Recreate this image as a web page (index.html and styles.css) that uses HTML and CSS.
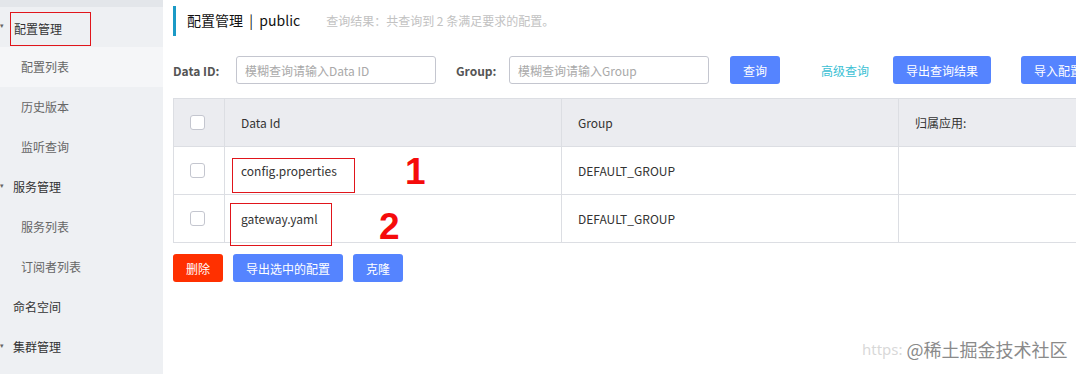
FILE: index.html
```html
<!DOCTYPE html>
<html lang="zh">
<head>
<meta charset="utf-8">
<title>配置管理</title>
<link rel="stylesheet" href="styles.css">
</head>
<body>
<div class="app">
  <aside class="sidebar">
    <div class="side-top"></div>
    <div class="menu-item group"><span class="caret">▾</span><span class="mark-box">配置管理</span></div>
    <div class="menu-item sub active">配置列表</div>
    <div class="menu-item sub">历史版本</div>
    <div class="menu-item sub">监听查询</div>
    <div class="menu-item group"><span class="caret">▾</span>服务管理</div>
    <div class="menu-item sub">服务列表</div>
    <div class="menu-item sub">订阅者列表</div>
    <div class="menu-item group">命名空间</div>
    <div class="menu-item group"><span class="caret">▾</span>集群管理</div>
  </aside>
  <main class="main">
    <div class="title-bar">
      <span class="title">配置管理 &nbsp;|&nbsp; public</span>
      <span class="result">查询结果：共查询到 2 条满足要求的配置。</span>
    </div>
    <div class="search-row">
      <label class="field-label">Data ID:</label>
      <div class="input">模糊查询请输入Data ID</div>
      <label class="field-label group-label">Group:</label>
      <div class="input">模糊查询请输入Group</div>
      <button class="btn btn-blue btn-query">查询</button>
      <a class="link">高级查询</a>
      <button class="btn btn-blue btn-export">导出查询结果</button>
      <button class="btn btn-blue btn-import">导入配置</button>
    </div>
    <div class="table">
      <div class="tr thead">
        <div class="td c-check"><span class="checkbox"></span></div>
        <div class="td c-id">Data Id</div>
        <div class="td c-group">Group</div>
        <div class="td c-app">归属应用:</div>
      </div>
      <div class="tr">
        <div class="td c-check"><span class="checkbox"></span></div>
        <div class="td c-id">config.properties</div>
        <div class="td c-group">DEFAULT_GROUP</div>
        <div class="td c-app"></div>
      </div>
      <div class="tr">
        <div class="td c-check"><span class="checkbox"></span></div>
        <div class="td c-id">gateway.yaml</div>
        <div class="td c-group">DEFAULT_GROUP</div>
        <div class="td c-app"></div>
      </div>
      <div class="anno box1"></div>
      <div class="anno box2"></div>
      <div class="anno num num1">1</div>
      <div class="anno num num2">2</div>
    </div>
    <div class="action-row">
      <button class="btn btn-red">删除</button>
      <button class="btn btn-blue btn-export-sel">导出选中的配置</button>
      <button class="btn btn-blue btn-clone">克隆</button>
    </div>
  </main>
  <div class="watermark"><span class="wm-url">https:</span><span class="wm-main">@稀土掘金技术社区</span></div>
</div>
</body>
</html>
```

FILE: styles.css
```css
* { box-sizing: border-box; }
html, body { margin: 0; padding: 0; }
body {
  width: 1076px;
  height: 374px;
  overflow: hidden;
  background: #fff;
  font-family: "Noto Sans CJK SC", "Noto Sans", sans-serif;
  font-size: 12px;
  color: #333;
}
.app {
  display: flex;
  height: 374px;
  position: relative;
  overflow: hidden;
}
.sidebar {
  width: 163px;
  flex: none;
  background: #eef0f3;
  display: flex;
  flex-direction: column;
}
.side-top {
  height: 7px;
  background: #e3e6ea;
}
.menu-item {
  height: 40px;
  display: flex;
  align-items: center;
  position: relative;
  color: #333;
  line-height: 1;
}
.menu-item.group { padding-left: 13px; }
.menu-item.sub { padding-left: 21px; color: #666; }
.menu-item.active { background: #f5f6f8; }
.caret {
  position: absolute;
  left: 0;
  top: 15px;
  font-size: 7px;
  color: #666;
}
.mark-box {
  display: flex;
  align-items: center;
  height: 34px;
  margin-left: -3px;
  padding-left: 3px;
  width: 81px;
  border: 1px solid #e0151b;
  margin-top: 3px;
}
.main {
  flex: 1;
  min-width: 0;
  padding: 6px 0 0 10px;
  overflow: hidden;
}
.title-bar {
  height: 30px;
  border-left: 3px solid #1b9ac6;
  display: flex;
  align-items: center;
  padding-left: 11px;
  padding-bottom: 2px;
}
.title {
  font-size: 14px;
  color: #111;
}
.result {
  margin-left: 26px;
  color: #c2c2c2;
  font-size: 12px;
}
.search-row {
  margin-top: 20px;
  height: 28px;
  display: flex;
  align-items: center;
  white-space: nowrap;
}
.search-row > * { flex: none; }
.field-label {
  font-weight: bold;
  color: #555;
  font-size: 12px;
  width: 63px;
}
.group-label {
  margin-left: 20px;
  width: 53px;
}
.input {
  width: 200px;
  height: 28px;
  border: 1px solid #c4c6cf;
  border-radius: 3px;
  padding-left: 8px;
  display: flex;
  align-items: center;
  color: #a9a9a9;
}
.btn {
  height: 28px;
  border: none;
  border-radius: 3px;
  color: #fff;
  font-family: inherit;
  font-size: 12px;
  padding: 0;
  flex: none;
}
.btn-blue { background: #5584ff; }
.btn-red { background: #ff3000; width: 50px; }
.btn-query { width: 50px; margin-left: 21px; }
.link {
  color: #3cbfd4;
  margin-left: 41px;
  width: 48px;
}
.btn-export { width: 98px; margin-left: 24px; }
.btn-import { width: 80px; margin-left: 30px; text-align: left; padding-left: 13px; }
.table {
  margin-top: 14px;
  width: 1000px;
  border: 1px solid #dcdee3;
  border-right: none;
  position: relative;
}
.tr {
  display: flex;
  height: 48px;
  border-top: 1px solid #dcdee3;
}
.tr:first-child { border-top: none; height: 47px; }
.thead { background: #ebecf0; }
.td {
  display: flex;
  align-items: center;
  padding-left: 16px;
  color: #333;
  border-left: 1px solid #dcdee3;
}
.td.c-check { width: 50px; border-left: none; padding-left: 16px; }
.c-id { width: 337px; }
.c-group { width: 337px; }
.c-app { flex: 1; }
.checkbox {
  width: 15px;
  height: 15px;
  border: 1px solid #c4c6cf;
  border-radius: 3px;
  background: #fff;
  display: block;
}
.anno { position: absolute; }
.box1 {
  left: 58px;
  top: 59px;
  width: 123px;
  height: 35px;
  border: 1px solid #e0151b;
}
.box2 {
  left: 56px;
  top: 104px;
  width: 102px;
  height: 43px;
  border: 1px solid #e0151b;
}
.num {
  color: #f50b0b;
  font-family: "Liberation Sans", Arial, sans-serif;
  font-weight: bold;
  font-size: 37px;
  line-height: 1;
}
.num1 { left: 231px; top: 54px; }
.num2 { left: 205px; top: 109px; }
.action-row {
  margin-top: 11px;
  display: flex;
  gap: 10px;
}
.btn-export-sel { width: 110px; }
.btn-clone { width: 50px; }
.watermark {
  position: absolute;
  left: 862px;
  top: 337px;
  display: flex;
  align-items: center;
  height: 24px;
}
.wm-url {
  font-family: "Noto Sans", sans-serif;
  font-size: 15px;
  color: rgba(190, 190, 190, 0.6);
  white-space: nowrap;
  margin-right: 4px;
}
.wm-main {
  font-size: 18px;
  color: #8a8a8a;
  white-space: nowrap;
  text-shadow: 0 0 2px #fff;
}
```
